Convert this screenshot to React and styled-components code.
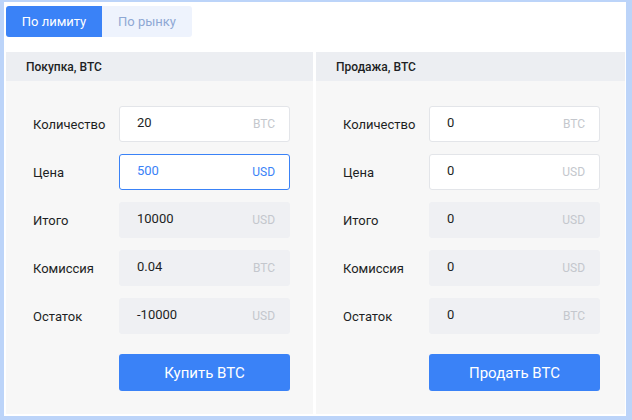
import React, { useState } from "react";
import styled, { createGlobalStyle } from "styled-components";

const colors = {
  frame: "#bcd4f9",
  primary: "#3a82f7",
  tabIdle: "#eef3fd",
  tabIdleText: "#8ea8d4",
  header: "#eceef2",
  column: "#f7f7f7",
  border: "#e3e5e9",
  readonly: "#eff0f3",
  text: "#1d1f24",
  unit: "#c4c7cd"
};

const GlobalStyle = createGlobalStyle`
  html, body {
    margin: 0;
    padding: 0;
    background: ${colors.frame};
  }
  body {
    font-family: Roboto, "Noto Sans", "Liberation Sans", sans-serif;
    color: ${colors.text};
  }
`;

const sides = [
  {
    title: "Покупка, BTC",
    action: "Купить BTC",
    rows: [
      { label: "Количество", value: "20", unit: "BTC" },
      { label: "Цена", value: "500", unit: "USD", focused: true },
      { label: "Итого", value: "10000", unit: "USD", readOnly: true },
      { label: "Комиссия", value: "0.04", unit: "BTC", readOnly: true },
      { label: "Остаток", value: "-10000", unit: "USD", readOnly: true }
    ]
  },
  {
    title: "Продажа, BTC",
    action: "Продать BTC",
    rows: [
      { label: "Количество", value: "0", unit: "BTC" },
      { label: "Цена", value: "0", unit: "USD" },
      { label: "Итого", value: "0", unit: "USD", readOnly: true },
      { label: "Комиссия", value: "0", unit: "USD", readOnly: true },
      { label: "Остаток", value: "0", unit: "BTC", readOnly: true }
    ]
  }
];

function App() {
  const [mode, setMode] = useState("limit");
  return (
    <>
      <GlobalStyle />
      <Frame>
        <Tabs>
          <Tab active={mode === "limit"} onClick={() => setMode("limit")}>
            По лимиту
          </Tab>
          <Tab active={mode === "market"} onClick={() => setMode("market")}>
            По рынку
          </Tab>
        </Tabs>
        <Columns>
          {sides.map(side => (
            <Column key={side.title}>
              <Header>{side.title}</Header>
              <Body>
                {side.rows.map(row => (
                  <Row key={row.label}>
                    <Label>{row.label}</Label>
                    <Field focused={row.focused} readOnly={row.readOnly}>
                      <Value focused={row.focused}>{row.value}</Value>
                      <Unit focused={row.focused}>{row.unit}</Unit>
                    </Field>
                  </Row>
                ))}
                <Row>
                  <Label />
                  <Action>{side.action}</Action>
                </Row>
              </Body>
            </Column>
          ))}
        </Columns>
      </Frame>
    </>
  );
}

const Frame = styled.div`
  box-sizing: border-box;
  background: #ffffff;
  margin: 2px 6px 0 4px;
  height: 414px;
  padding: 4px 1px 2px 2px;
  display: flex;
  flex-direction: column;
`;

const Tabs = styled.div`
  display: flex;
  height: 31px;
  margin-bottom: 15px;
`;

const Tab = styled.button`
  border: none;
  outline: none;
  cursor: pointer;
  font-family: inherit;
  font-size: 13px;
  padding: 0;
  background: ${props => (props.active ? colors.primary : colors.tabIdle)};
  color: ${props => (props.active ? "#ffffff" : colors.tabIdleText)};
  border-radius: ${props => (props.active ? "3px 0 0 3px" : "0 3px 3px 0")};
  width: ${props => (props.active ? "96px" : "90px")};
`;

const Columns = styled.div`
  flex: 1;
  display: grid;
  grid-template-columns: 307px 309px;
  column-gap: 3px;
`;

const Column = styled.section`
  display: flex;
  flex-direction: column;
  background: ${colors.column};
`;

const Header = styled.div`
  height: 29px;
  display: flex;
  align-items: center;
  padding-left: 20px;
  background: ${colors.header};
  font-size: 12px;
  font-weight: 500;
`;

const Body = styled.div`
  display: flex;
  flex-direction: column;
  gap: 12px;
  padding: 25px 0 0 27px;
`;

const Row = styled.div`
  display: flex;
  align-items: center;
`;

const Label = styled.div`
  width: 86px;
  font-size: 13px;
  color: ${colors.text};
`;

const Field = styled.div`
  box-sizing: border-box;
  width: 171px;
  height: 36px;
  display: flex;
  align-items: center;
  justify-content: space-between;
  padding: 0 14px 0 17px;
  border-radius: 3px;
  background: ${props => (props.readOnly ? colors.readonly : "#ffffff")};
  border: 1px solid
    ${props =>
      props.focused
        ? colors.primary
        : props.readOnly
        ? colors.readonly
        : colors.border};
`;

const Value = styled.span`
  font-size: 13px;
  margin-bottom: 3px;
  color: ${props => (props.focused ? colors.primary : colors.text)};
`;

const Unit = styled.span`
  font-size: 12px;
  color: ${props => (props.focused ? colors.primary : colors.unit)};
`;

const Action = styled.button`
  margin-top: 8px;
  width: 171px;
  height: 37px;
  border: none;
  border-radius: 3px;
  background: ${colors.primary};
  color: #ffffff;
  font-family: inherit;
  font-size: 15px;
  cursor: pointer;
`;

export default App;
